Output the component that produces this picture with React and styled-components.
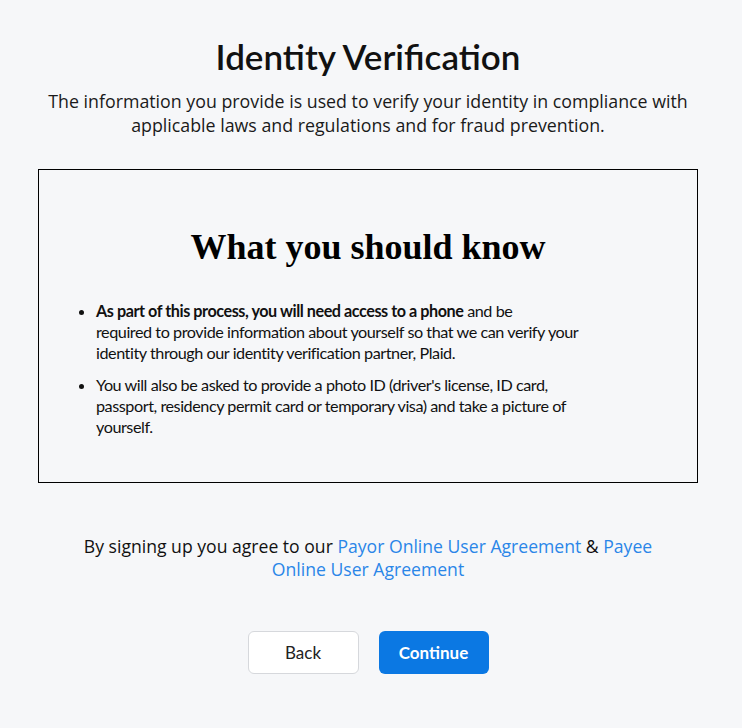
import React from 'react';
import styled, { createGlobalStyle } from 'styled-components';

const GlobalStyle = createGlobalStyle`
  html, body {
    margin: 0;
    padding: 0;
    background: #f6f7f9;
  }
  body {
    font-family: "Open Sans", "Liberation Sans", sans-serif;
    color: #111;
  }
`;

const Page = styled.div`
  min-height: 728px;
  display: flex;
  flex-direction: column;
  align-items: center;
  padding: 34px 44px 0 38px;
  box-sizing: border-box;
`;

const Title = styled.h1`
  margin: 0;
  font-family: "Lato", "Inter", sans-serif;
  font-weight: 600;
  font-size: 35px;
  line-height: 44px;
  color: #111;
  text-align: center;
`;

const Intro = styled.p`
  margin: 11px 0 0 0;
  font-size: 17.8px;
  line-height: 24px;
  text-align: center;
  color: #1a1a1a;
`;

const InfoBox = styled.section`
  margin-top: 32px;
  width: 660px;
  height: 314px;
  box-sizing: border-box;
  border: 1px solid #000;
  padding: 0 40px 0 40px;
`;

const BoxHeading = styled.h2`
  margin: 55px 0 31px 0;
  font-family: "Liberation Serif", "Times New Roman", serif;
  font-weight: 700;
  font-size: 36px;
  line-height: 44px;
  text-align: center;
  color: #000;
`;

const List = styled.ul`
  margin: 0;
  padding-left: 17px;
  max-width: 496px;
  font-family: "Lato", "Inter", sans-serif;
  font-size: 16.2px;
  letter-spacing: -0.45px;
  line-height: 21px;
  color: #111;
`;

const Item = styled.li`
  margin-bottom: ${p => (p.last ? 0 : '11px')};
`;

const Agreement = styled.p`
  margin: 52px 0 0 0;
  width: 590px;
  font-size: 17.6px;
  line-height: 23px;
  text-align: center;
  color: #111;
`;

const Link = styled.a`
  color: #2a86e8;
  text-decoration: none;
`;

const Actions = styled.div`
  margin-top: 50px;
  display: flex;
  gap: 20px;
`;

const Button = styled.button`
  width: ${p => (p.primary ? '110px' : '111px')};
  height: 43px;
  border-radius: 6px;
  font-family: "Lato", "Inter", sans-serif;
  font-size: 17px;
  font-weight: ${p => (p.primary ? 700 : 400)};
  cursor: pointer;
  background: ${p => (p.primary ? '#0b78e3' : '#fff')};
  color: ${p => (p.primary ? '#fff' : '#222')};
  border: ${p => (p.primary ? 'none' : '1px solid #d6d8dc')};
`;

const App = () => {
  return (
    <>
      <GlobalStyle />
      <Page>
        <Title>Identity Verification</Title>
        <Intro>
          The information you provide is used to verify your identity in compliance with
          <br />
          applicable laws and regulations and for fraud prevention.
        </Intro>
        <InfoBox>
          <BoxHeading>What you should know</BoxHeading>
          <List>
            <Item>
              <strong>As part of this process, you will need access to a phone</strong> and be
              <br />
              required to provide information about yourself so that we can verify your
              identity through our identity verification partner, Plaid.
            </Item>
            <Item last>
              You will also be asked to provide a photo ID (driver's license, ID card,
              passport, residency permit card or temporary visa) and take a picture of
              yourself.
            </Item>
          </List>
        </InfoBox>
        <Agreement>
          By signing up you agree to our <Link href="#">Payor Online User Agreement</Link> &amp;{' '}
          <Link href="#">Payee Online User Agreement</Link>
        </Agreement>
        <Actions>
          <Button>Back</Button>
          <Button primary>Continue</Button>
        </Actions>
      </Page>
    </>
  );
};

export default App;
